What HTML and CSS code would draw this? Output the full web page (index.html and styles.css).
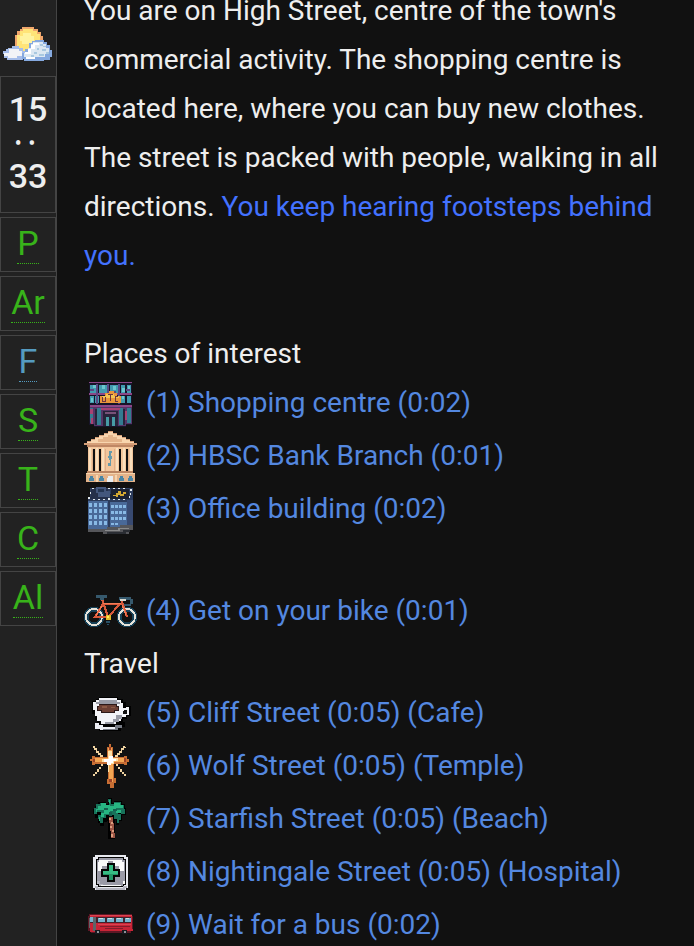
FILE: index.html
```
<!DOCTYPE html>
<html lang="en">
	<head>
		<meta charset="UTF-8">
		<meta name="viewport" content="width=device-width, initial-scale=1">
		<title>High Street</title>
		<link rel="stylesheet" href="styles.css">
	</head>
	<body>
		<div class="game">
			<aside class="sidebar">
				<svg class="weather" viewBox="0 0 56 40" aria-hidden="true">
					<path fill="#f0a66c" d="M22 1h12v2h4v3h3v4h2v12h-2v4h-5v3H22v-3h-5v-3h-2V9h2V5h3V3h2z"/>
					<path fill="#ffe478" d="M23 3h10v2h4v3h3v13h-4v5H21v-4h-4V9h3V5h3z"/>
					<path fill="#fff3a0" d="M23 7h8v3h3v8H22v-3h-2v-5h3z"/>
					<path fill="#a6bde9" d="M8 22h4v-2h7v2h4v3h2v6h-2v3H7v-2H4v-4h-1v-3h3v-2h2z"/>
					<path fill="#f2f3f7" d="M9 23h10v2h3v5h-5v2H8v-2H4v-3h5z"/>
					<path fill="#85a9df" d="M32 15h3v-1h9v2h3v3h3v5h2v7h-2v3h-6v1H24v-2h-2v-6h3v-4h4v-6h3z"/>
					<path fill="#dce8f2" d="M33 16h10v2h3v4h3v6h-4v3H24v-4h4v-5h3v-4h2z"/>
					<path fill="#fff" d="M33 17h6v2h-4v4h-4v5h-6v-2h3v-3h3v-4h2zM26 31h9v2h-9z"/>
					<path fill="#a9c9e0" d="M40 18h3v2h-3zM37 22h2v2h-2zM42 23h4v2h-4zM34 26h3v2h-3zM39 28h5v2h-5zM46 26h3v2h-3zM43 20h3v1h-3zM31 29h3v2h-3z"/>
				</svg>
				<div class="clock">
					<span>15</span>
					<span class="colon">:</span>
					<span>33</span>
				</div>
				<div class="stats">
					<div class="stat"><span>P</span></div>
					<div class="stat"><span>Ar</span></div>
					<div class="stat fatigue"><span>F</span></div>
					<div class="stat"><span>S</span></div>
					<div class="stat"><span>T</span></div>
					<div class="stat"><span>C</span></div>
					<div class="stat"><span>Al</span></div>
				</div>
			</aside>
			<main class="passage">
				<p class="intro">You are on High Street, centre of the town's commercial activity. The shopping centre is located here, where you can buy new clothes. The street is packed with people, walking in all directions. <span class="warning">You keep hearing footsteps behind you.</span></p>

				<h2>Places of interest</h2>
				<ul class="links">
					<li>
						<svg class="icon" viewBox="0 0 53 53" aria-hidden="true">
							<path fill="#171429" d="M5 4h43v43h-6v2H10v-2H5z"/>
							<path fill="#8c4788" d="M5 4h43v1H5zM5 15h43v2H5zM6 27h42v2H6z"/>
							<path fill="#429bb0" d="M6 7h6v8H6zM15 7h8v8h-8zM26 7h8v8h-8zM37 7h4v8h-4zM43 7h4v8h-4zM6 18h4v7H6zM11 18h4v7h-4zM37 18h4v7h-4zM43 18h4v7h-4z"/>
							<path fill="#6cc6cf" d="M9 7h3v3H9zM18 7h3v4h-3zM29 8h3v4h-3zM38 10h3v4h-3zM7 20h2v4H7zM38 18h2v3h-2zM44 8h2v3h-2z"/>
							<path fill="#584984" d="M12 6h2v20h-2zM23 6h2v11h-2zM34 6h2v20h-2zM6 11h4v2H6zM27 13h5v2h-5zM42 11h4v2h-4z"/>
							<path fill="#563567" d="M6 29h42v17h-6v2H10v-2H6z"/>
							<path fill="#347c91" d="M6 30h3v15H6zM13 30h4v17h-4zM35 30h4v17h-4zM43 30h4v15h-4z"/>
							<path fill="#a84272" d="M6 31h3v5H6zM41 33h2v9h-2zM7 40h2v6H7zM17 30h19v2H17z"/>
							<path fill="#27233a" d="M19 33h15v15H19zM11 31h2v16h-2zM39 31h2v16h-2z"/>
							<path fill="#785178" d="M21 34h11v2H21z"/>
							<path fill="#479ba5" d="M22 39h3v9h-3zM28 39h3v9h-3z"/>
							<path fill="#e9963b" d="M16 18h5v-3h4v-2h5v2h3v3h4v7H16z"/>
							<path fill="#f4c553" d="M18 18h4v-2h8v2h5v2H18z"/>
							<path fill="#6d3540" d="M18 19h1v4h2v-4h1v5h-4zM24 16h5v1h-2v6h-1v-6h-2zM31 18h3v1h-2v4h2v1h-3z"/>
						</svg>
						<a href="#">(1) Shopping centre (0:02)</a>
					</li>
					<li>
						<svg class="icon" viewBox="0 0 53 53" aria-hidden="true">
							<path fill="#d69f78" d="M24 0h5v2h4v2h5v2h4v2h4v2h4v2h3v2H0v-2h3v-2h4V8h4V6h4V4h5V2h4z"/>
							<path fill="#f8d5ae" d="M24 1h5v2h4v2h5v2h4v2h4v2h4v1H3v-1h4V9h4V7h4V5h5V3h4z"/>
							<path fill="#e5b58b" d="M24 4h5v2h4v2h5v3H14V8h5V6h5z"/>
							<path fill="#bf8764" d="M3 14h47v2H3z"/>
							<path fill="#f3c69c" d="M4 16h45v25H4z"/>
							<path fill="#101010" d="M9 18h2v22H9zM15 18h2v22h-2zM35 18h2v22h-2zM42 18h2v22h-2z"/>
							<path fill="#fae0be" d="M5 17h2v23H5zM12 17h2v23h-2zM18 17h2v23h-2zM32 17h2v23h-2zM39 17h2v23h-2zM46 17h2v23h-2z"/>
							<path fill="#dfb08a" d="M8 18h1v22H8zM21 18h1v22h-1zM30 18h1v22h-1zM44 18h1v22h-1z"/>
							<path fill="#659aaa" d="M25 20h3v2h-1v3h1v3h-1v7h-3v-3h2v-3h-1zM24 25h1v2h-1z"/>
							<path fill="#ba8461" d="M3 40h46v2H3z"/>
							<path fill="#e3b38a" d="M2 42h49v9H2z"/>
							<path fill="#f6d5ae" d="M2 42h49v1H2zM12 44h2v7h-2zM31 44h2v7h-2z"/>
							<path fill="#4a86a5" d="M6 45h3v2h1v3H5v-3h1zM16 45h3v2h1v3h-5v-3h1zM36 45h3v2h1v3h-5v-3h1zM45 45h3v2h1v3h-5v-3h1z"/>
							<path fill="#e8edf0" d="M24 45h5v6h-6v-4h1z"/>
						</svg>
						<a href="#">(2) HBSC Bank Branch (0:01)</a>
					</li>
					<li>
						<svg class="icon" viewBox="0 0 53 53" aria-hidden="true">
							<path fill="#2c3c5c" d="M6 4h43v42h-4v4H19v-2H4V13h2z"/>
							<path fill="#25304a" d="M7 5h17v10H5v-2h2z"/>
							<path fill="#1c2232" d="M27 5h18v10H26z"/>
							<path fill="#43577d" d="M12 3h10v4h4v6H14V9h-2z"/>
							<path fill="#263754" d="M14 5h6v3h-6z"/>
							<path fill="#e1e8ec" d="M8 4h2v1H8zM24 4h2v1h-2zM29 4h2v1h-2zM34 4h2v1h-2zM39 4h2v1h-2zM46 5h2v2h-2zM6 8h1v2H6zM4 13h2v2H4zM9 15h2v1H9zM14 15h2v1h-2zM19 15h2v1h-2zM24 14h2v2h-2zM29 15h2v1h-2zM34 15h2v1h-2zM39 15h2v1h-2zM45 12h1v2h-1zM46 9h1v2h-1z"/>
							<path fill="#d3a832" d="M29 11h3V9h2V7h3v3h2V8h3v2h-2v2h-4v-1h-2v2h-2v-1h-3z"/>
							<path fill="#496998" d="M4 17h20v29H4zM26 18h17v26H26z"/>
							<path fill="#88b9e5" d="M5 19h3v4H5zM10 19h3v4h-3zM15 19h3v4h-3zM20 19h3v4h-3zM5 25h3v4H5zM10 25h3v4h-3zM15 25h3v4h-3zM20 25h3v4h-3zM5 31h3v4H5zM10 31h3v4h-3zM15 31h3v4h-3zM20 31h3v4h-3zM5 37h3v4H5zM10 37h3v4h-3zM15 37h3v4h-3zM20 37h3v4h-3zM27 21h3v3h-3zM31 21h3v3h-3zM35 21h3v3h-3zM39 21h3v3h-3zM27 27h3v3h-3zM31 27h3v3h-3zM35 27h3v3h-3zM39 27h3v3h-3zM27 33h3v3h-3zM31 33h3v3h-3zM35 33h3v3h-3zM39 33h3v3h-3zM27 39h3v2h-3zM31 39h3v2h-3z"/>
							<path fill="#384a71" d="M43 16h6v27h-6z"/>
							<path fill="#55565a" d="M4 45h19v-2h13v-2h13v5h-4v4H19v-2H4z"/>
							<path fill="#898a8b" d="M21 46h13v-2h11v1h-9v2H21z"/>
							<path fill="#2a2d33" d="M23 48h16v-2h7v2h-4v2H23z"/>
						</svg>
						<a href="#">(3) Office building (0:02)</a>
					</li>
				</ul>

				<ul class="links bike">
					<li>
						<svg class="icon" viewBox="0 0 53 53" aria-hidden="true">
							<g fill="none">
								<circle cx="10" cy="31" r="8" stroke="#174157" stroke-width="5"/>
								<circle cx="43" cy="31" r="8" stroke="#174157" stroke-width="5"/>
								<circle cx="10" cy="31" r="8" stroke="#e5e2d9" stroke-width="2"/>
								<circle cx="43" cy="31" r="8" stroke="#e5e2d9" stroke-width="2"/>
								<path stroke="#d9593b" stroke-width="2" d="M18 13l6 18M19 18h19M36 18L25 30M19 18L11 31h13M37 13l6 18"/>
								<path stroke="#f47d57" d="M19 17h18M18 20l-6 10M38 19l4 10"/>
							</g>
							<path fill="#36596d" d="M12 9h11v3h-3v2h-4v-2h-4zM35 11h12v2h2v5h-2v2h-7v-2h6v-4H35z"/>
							<path fill="#d8d9cf" d="M36 13h6v2h-6z"/>
							<path fill="#e1b928" d="M22 29h5v5h-5z"/>
							<path fill="#fff05a" d="M23 30h2v2h-2z"/>
							<path fill="#285066" d="M22 35h4v2h-4zM23 38h2v1h-2z"/>
						</svg>
						<a href="#">(4) Get on your bike (0:01)</a>
					</li>
				</ul>

				<h2>Travel</h2>
				<ul class="links">
					<li>
						<svg class="icon" viewBox="0 0 53 53" aria-hidden="true">
							<path fill="#000" d="M15 9h19v2h5v3h3v4h5v10h-4v3h-4v3h2v5h-4v4H15v-2h-4v-6h2v-3h-2v-6H8V13h4v-2h3z"/>
							<path fill="#f2f3f7" d="M15 10h18v2h4v3h2v5h3v-1h3v8h-3v2h-5v4h-5v3H17v-3h-4v-5h-2v-6H9v-8h3v-2h3z"/>
							<path fill="#999ba6" d="M15 12h18v2h3v2H12v-2h3zM32 27h6v4h-3v3h-5v2h-9v-2h8v-3h3z"/>
							<path fill="#2c1919" d="M15 16h18v2h2v5h-4v2H17v-2h-4v-5h2z"/>
							<path fill="#6d4034" d="M15 17h17v2h2v3h-4v2H18v-2h-4v-3h1z"/>
							<path fill="#8c5945" d="M18 18h5v2h-5zM27 19h4v1h-4z"/>
							<path fill="#111" d="M40 22h3v4h-4v-3h1z"/>
							<path fill="#eceef4" d="M11 35h4v2h4v2h13v-2h5v3h-4v2H16v-1h-5z"/>
							<path fill="#777b85" d="M31 37h7v3h-4v2H19v-1h12z"/>
						</svg>
						<a href="#">(5) Cliff Street (0:05) (Cafe)</a>
					</li>
					<li>
						<svg class="icon" viewBox="0 0 53 53" aria-hidden="true">
							<path fill="#f0d3a0" d="M9 5h2v2h2v3h2v2h2v2h2v3h-3v-3h-2v-2h-2V9h-2V7H9zM41 5h-2v2h-2v3h-2v2h-2v2h-2v3h3v-3h2v-2h2V9h2V7h2zM9 33h2v-2h2v-3h2v-2h2v-3h2v2h-2v3h-2v3h-2v2h-2v2H9zM42 33h-2v-2h-2v-3h-2v-2h-2v-3h-2v2h2v3h2v3h2v2h2v2h2z"/>
							<path fill="#c76e33" d="M25 3h2v3h2v10h11v-1h3v3h2v3h-2v3h-3v-1H30v14h2v5h-2v5h-4v-4h-3v-5h1V23H11v1H8v-4H6v-2h2v-3h3v1h12V6h2z"/>
							<path fill="#f2a653" d="M24 7h4v10h12v4H29v20h-4V21H11v-4h13z"/>
							<path fill="#ffe1a5" d="M24 10h4v7h6v3h-4v3h-5v8h-1V21h-6v-3h6z"/>
							<path fill="#fff" d="M25 15h4v3h3v2h-3v2h-2v2h-4v-3h-3v-3h5z"/>
							<path fill="#9c4228" d="M25 6h2v3h-2zM9 18h2v3H9zM40 17h2v4h-2zM25 38h3v3h-3z"/>
						</svg>
						<a href="#">(6) Wolf Street (0:05) (Temple)</a>
					</li>
					<li>
						<svg class="icon" viewBox="0 0 53 53" aria-hidden="true">
							<path fill="#000" d="M24 4h4v5h2V7h8v3h3v4h1v7h-4v6h-3v4h-3v-5h-1v19h-7V26l-2 2h-2v4h-4v-3h-2v-5h-3v-4h-2v-5h2v-3h3V8h8v2h2z"/>
							<path fill="#18725a" d="M24 5h3v5h3V8h7v3h3v4h1v5h-4v-3h-3v3h3v6h-2v3h-2v-4h-3v-4h-8v3h-3v5h-3v-4h-2v-4h3v-3h-4v2h-3v-6h2v-4h4V9h6v2h3z"/>
							<path fill="#27b582" d="M25 6h1v6h4V9h6v2h3v3h-7v2h5v3h-5v-2h-6v3h-6v3h-4v4h-1v-4h2v-4h3v-3h-7v2h-1v-3h2v-3h3v-3h5v2h4z"/>
							<path fill="#15604f" d="M20 14h4v2h-4zM29 15h4v2h-4zM25 18h3v4h-3z"/>
							<path fill="#9b5545" d="M25 23h4v6h1v10h1v5h-4v-7h-1v-8h-1z"/>
							<path fill="#dc9d7e" d="M25 24h2v2h-2zM27 28h2v2h-2zM26 32h2v2h-2zM28 36h2v2h-2zM27 40h2v3h-2z"/>
						</svg>
						<a href="#">(7) Starfish Street (0:05) (Beach)</a>
					</li>
					<li>
						<svg class="icon" viewBox="0 0 53 53" aria-hidden="true">
							<path fill="#e9eaf0" d="M11 8h31v2h2v31h-2v2H11v-2H9V10h2z"/>
							<path fill="#050505" d="M14 10h26v2h2v26h-2v2H14v-2h-2V12h2z"/>
							<path fill="#9a9aa6" d="M15 11h24v2h2v24h-2v2H15v-2h-2V13h2z"/>
							<path fill="#fafafa" d="M15 13h23v2h2v9h-5v-5h-6v-5h-5v5h-6v5h-4v-9h1z"/>
							<path fill="#b5b5bf" d="M11 39h3v2h25v-2h4v2h-2v2H12v-2h-1zM13 34h3v3h3v2h-4v-2h-2z"/>
							<path fill="#fafafa" d="M17 38h20v1H17zM39 34h2v3h-2z"/>
							<path fill="#050505" d="M23 16h8v6h5v8h-5v5h-8v-5h-6v-8h6z"/>
							<path fill="#239665" d="M25 18h4v6h5v4h-5v5h-4v-5h-6v-4h6z"/>
							<path fill="#37bd83" d="M25 18h4v6h5v3H19v-3h6z"/>
						</svg>
						<a href="#">(8) Nightingale Street (0:05) (Hospital)</a>
					</li>
					<li>
						<svg class="icon" viewBox="0 0 53 53" aria-hidden="true">
							<path fill="#5d1725" d="M5 14h43v2h1v15h-2v2H7v-2H4V16h1z"/>
							<path fill="#c82436" d="M6 15h42v14h1v2H14v1H6z"/>
							<path fill="#da4350" d="M6 15h42v1H6zM14 24h33v1H14z"/>
							<path fill="#42232d" d="M5 17h42v6H5z"/>
							<path fill="#74b4ce" d="M6 17h3v5H6zM14 18h7v4h-7zM23 18h7v4h-7zM32 18h7v4h-7zM41 18h6v4h-6z"/>
							<path fill="#c9e1e3" d="M15 18h4v1h-4zM24 18h4v1h-4zM33 18h4v1h-4zM42 18h3v1h-3z"/>
							<path fill="#5e6569" d="M9 17h3v14H9zM5 18h1v10H5z"/>
							<path fill="#821c2b" d="M16 26h30v1H16zM21 28h18v1H21z"/>
							<path fill="#171a20" d="M11 30h5v4h-5zM38 30h5v4h-5z"/>
							<path fill="#8d9298" d="M13 31h2v2h-2zM40 31h2v2h-2z"/>
						</svg>
						<a href="#">(9) Wait for a bus (0:02)</a>
					</li>
				</ul>
			</main>
		</div>
	</body>
</html>
```
FILE: styles.css
```
*,
*::before,
*::after{
	box-sizing: border-box;
}
body{
	margin: 0;
	background: #111;
	color: #eee;
	font-family: Roboto, "Liberation Sans", sans-serif;
	font-size: 28px;
	line-height: 49px;
}
.game{
	display: flex;
	height: 100vh;
	overflow: hidden;
}

/* sidebar */
.sidebar{
	flex: none;
	width: 57px;
	padding-top: 26px;
	background: #222;
	border-right: 1px solid #444;
}
.weather{
	display: block;
	width: 56px;
	height: 40px;
	shape-rendering: crispEdges;
}
.clock{
	display: flex;
	flex-direction: column;
	align-items: center;
	gap: 12px;
	height: 137px;
	margin-top: 10px;
	padding-top: 15px;
	border: 1px solid #444;
	font-size: 34px;
	font-weight: 500;
	line-height: 34px;
}
/* colon lies on its side between hours and minutes */
.clock .colon{
	writing-mode: vertical-rl;
}
.stats{
	display: flex;
	flex-direction: column;
	gap: 4px;
	margin-top: 4px;
}
.stat{
	height: 55px;
	padding-top: 5px;
	border: 1px solid #444;
	color: #38b31a;
	font-size: 34px;
	line-height: 40px;
	text-align: center;
}
.stat span{
	display: inline-block;
	border-bottom: 1px dotted;
}
.fatigue{
	color: #559bc0;
}

/* passage, scrolled a little past its first line */
.passage{
	flex: 1;
	min-width: 0;
	margin-top: -14px;
	padding: 0 27px;
}
.intro{
	margin: 0 0 49px;
}
.warning{
	color: #4372ff;
}
.passage h2{
	margin: 0;
	font-size: 28px;
	font-weight: 400;
}
.links{
	margin: 0;
	padding: 0;
	list-style: none;
}
.links li{
	display: flex;
	gap: 9px;
	height: 53px;
}
.links a{
	color: #5488e0;
	text-decoration: none;
}
.bike{
	margin-top: 49px;
}
.icon{
	flex: none;
	width: 53px;
	height: 53px;
	shape-rendering: crispEdges;
}
```
